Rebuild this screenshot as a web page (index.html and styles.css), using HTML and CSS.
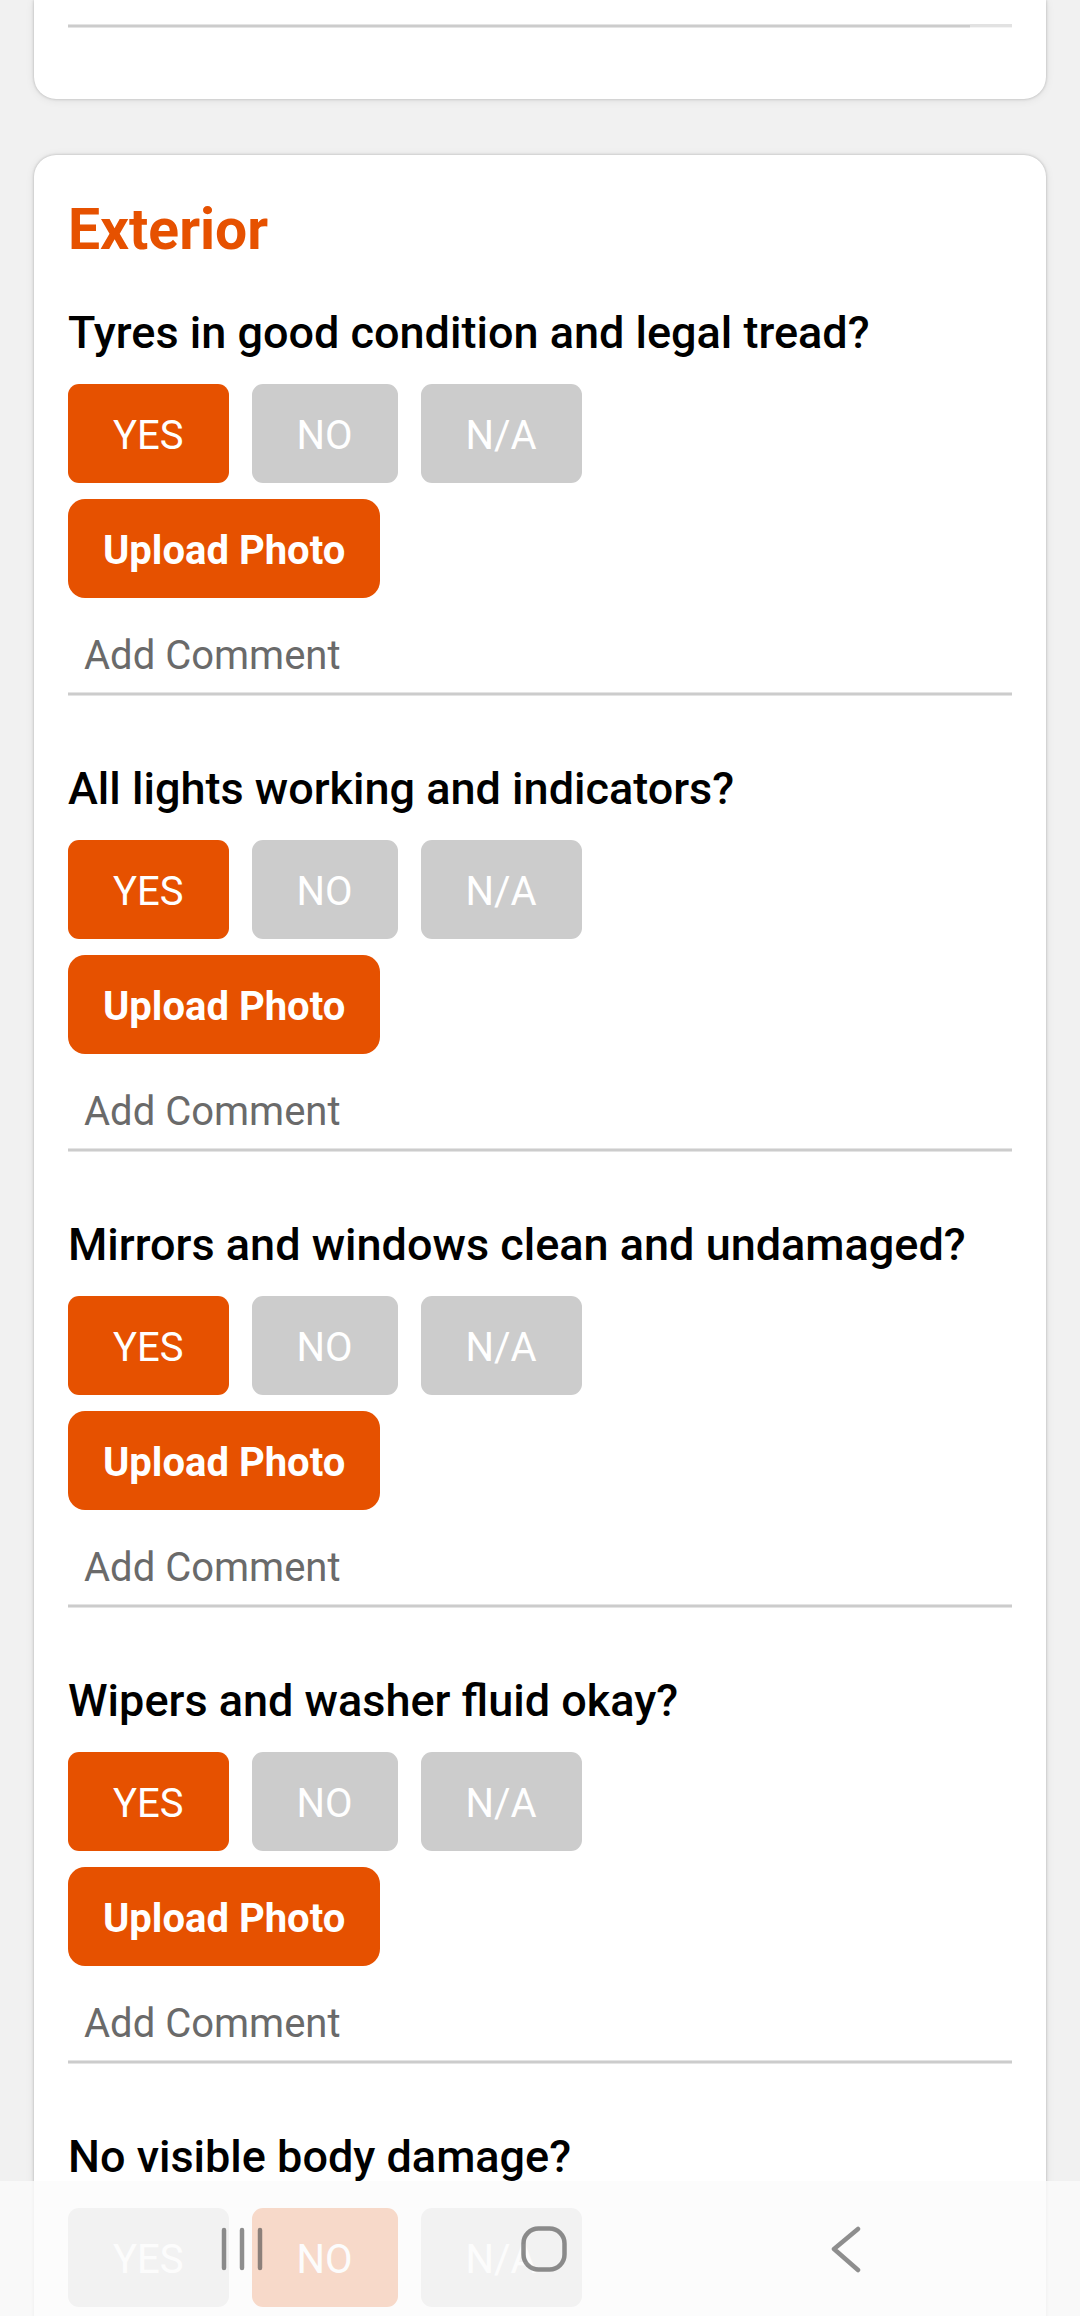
FILE: index.html
```html
<!DOCTYPE html>
<html lang="en">
<head>
<meta charset="utf-8">
<meta name="viewport" content="width=device-width, initial-scale=1">
<title>Vehicle Inspection</title>
<link rel="stylesheet" href="styles.css">
</head>
<body>
<main class="screen">
  <section class="card card-previous">
    <div class="rule"></div>
  </section>

  <section class="card">
    <h2 class="card-title">Exterior</h2>

    <div class="check" role="group" aria-labelledby="q-tyres">
      <h3 class="question" id="q-tyres">Tyres in good condition and legal tread?</h3>
      <div class="answers">
        <button type="button" class="btn answer selected" aria-pressed="true">YES</button>
        <button type="button" class="btn answer" aria-pressed="false">NO</button>
        <button type="button" class="btn answer" aria-pressed="false">N/A</button>
      </div>
      <button type="button" class="btn upload">Upload Photo</button>
      <input type="text" class="comment" placeholder="Add Comment" aria-labelledby="q-tyres">
    </div>

    <div class="check" role="group" aria-labelledby="q-lights">
      <h3 class="question" id="q-lights">All lights working and indicators?</h3>
      <div class="answers">
        <button type="button" class="btn answer selected" aria-pressed="true">YES</button>
        <button type="button" class="btn answer" aria-pressed="false">NO</button>
        <button type="button" class="btn answer" aria-pressed="false">N/A</button>
      </div>
      <button type="button" class="btn upload">Upload Photo</button>
      <input type="text" class="comment" placeholder="Add Comment" aria-labelledby="q-lights">
    </div>

    <div class="check" role="group" aria-labelledby="q-mirrors">
      <h3 class="question" id="q-mirrors">Mirrors and windows clean and undamaged?</h3>
      <div class="answers">
        <button type="button" class="btn answer selected" aria-pressed="true">YES</button>
        <button type="button" class="btn answer" aria-pressed="false">NO</button>
        <button type="button" class="btn answer" aria-pressed="false">N/A</button>
      </div>
      <button type="button" class="btn upload">Upload Photo</button>
      <input type="text" class="comment" placeholder="Add Comment" aria-labelledby="q-mirrors">
    </div>

    <div class="check" role="group" aria-labelledby="q-wipers">
      <h3 class="question" id="q-wipers">Wipers and washer fluid okay?</h3>
      <div class="answers">
        <button type="button" class="btn answer selected" aria-pressed="true">YES</button>
        <button type="button" class="btn answer" aria-pressed="false">NO</button>
        <button type="button" class="btn answer" aria-pressed="false">N/A</button>
      </div>
      <button type="button" class="btn upload">Upload Photo</button>
      <input type="text" class="comment" placeholder="Add Comment" aria-labelledby="q-wipers">
    </div>

    <div class="check" role="group" aria-labelledby="q-body">
      <h3 class="question" id="q-body">No visible body damage?</h3>
      <div class="answers">
        <button type="button" class="btn answer" aria-pressed="false">YES</button>
        <button type="button" class="btn answer selected" aria-pressed="true">NO</button>
        <button type="button" class="btn answer" aria-pressed="false">N/A</button>
      </div>
    </div>
  </section>
</main>

<nav class="system-nav">
  <button type="button" class="nav-button" aria-label="Recent apps">
    <svg class="nav-icon" viewBox="0 0 48 48"><path d="M6 5v38M24 5v38M42 5v38"/></svg>
  </button>
  <button type="button" class="nav-button" aria-label="Home">
    <svg class="nav-icon" viewBox="0 0 48 48"><rect x="3.500" y="3.500" width="41" height="41" rx="15"/></svg>
  </button>
  <button type="button" class="nav-button" aria-label="Back">
    <svg class="nav-icon" viewBox="0 0 48 48"><path d="M36 4 12 24 36 45"/></svg>
  </button>
</nav>
</body>
</html>
```
FILE: styles.css
```css
:root {
  --accent: #e65100;
  --muted: #ccc;
  --rule: linear-gradient(#e4e4e4 1px, #ccc 1px 3px, #e4e4e4 3px);
}

* {
  box-sizing: border-box;
}

body {
  margin: 0;
  background: #f1f1f1;
  color: #000;
  font-family: Roboto, "Liberation Sans", sans-serif;
}

.screen {
  display: flex;
  flex-direction: column;
  gap: 56px;
  height: 100vh;
  padding: 0 34px;
  overflow: hidden;
}

.card {
  flex: none;
  padding: 42px 34px 34px;
  border-radius: 22px;
  background: #fff;
  box-shadow: 0 0 3px rgba(0, 0, 0, 0.24), 0 1px 10px rgba(0, 0, 0, 0.08);
}

/* Tail of the section scrolled off the top */
.card-previous {
  padding: 24px 34px 71px;
  border-radius: 0 0 22px 22px;
}

.rule {
  display: flex;
  justify-content: flex-end;
  height: 4px;
  background: var(--rule);
}

.rule::after {
  content: "";
  width: 42px;
  background: linear-gradient(#e2e2e2 3px, #f4f4f4 3px);
}

.card-title {
  margin: 0 0 43px;
  color: var(--accent);
  font-size: 57px;
  font-weight: 700;
  line-height: 66px;
}

.check {
  display: flex;
  flex-direction: column;
  align-items: flex-start;
}

.check + .check {
  margin-top: 66px;
}

.question {
  margin: 0 0 25px;
  font-size: 45px;
  font-weight: 500;
  line-height: 53px;
}

.answers {
  display: flex;
  gap: 23px;
}

.btn {
  height: 99px;
  padding: 4px 45px 0;
  border: 0;
  background: var(--accent);
  color: #fff;
  font-family: inherit;
  font-size: 40px;
  line-height: 46px;
}

.answer {
  border-radius: 11px;
  background: var(--muted);
}

.answer.selected {
  background: var(--accent);
}

.upload {
  margin-top: 16px;
  padding: 4px 35px 0;
  border-radius: 17px;
  font-weight: 700;
}

.comment {
  width: 100%;
  height: 81px;
  margin-top: 17px;
  padding: 0 16px;
  border: 0;
  background: var(--rule) bottom / 100% 4px no-repeat;
  color: #000;
  font-family: inherit;
  font-size: 40px;
  line-height: 46px;
}

.comment::placeholder {
  color: #6a6a6a;
  opacity: 1;
}

.system-nav {
  position: fixed;
  inset: auto 0 0;
  display: grid;
  grid-template-columns: repeat(3, 1fr);
  height: 135px;
  padding: 0 83px 0 91px;
  background: rgba(251, 251, 251, 0.8);
}

.nav-button {
  display: grid;
  place-items: center;
  padding: 0;
  border: 0;
  background: none;
}

.nav-icon {
  width: 48px;
  height: 48px;
  fill: none;
  stroke: rgba(70, 70, 70, 0.6);
  stroke-width: 4.5;
  stroke-linecap: round;
  stroke-linejoin: round;
}
```
